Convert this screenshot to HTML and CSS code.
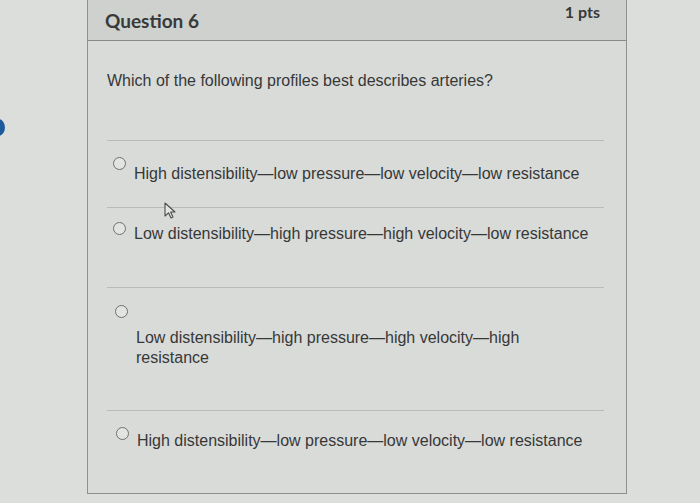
FILE: index.html
```html
<!DOCTYPE html>
<html>
<head>
<meta charset="utf-8">
<link rel="stylesheet" href="styles.css">
</head>
<body>
<div class="dot"></div>
<div class="card">
  <div class="header">
    <div class="title">Question 6</div>
    <div class="pts">1 pts</div>
  </div>
  <div class="body">
    <p class="question">Which of the following profiles best describes arteries?</p>
    <div class="answers">
      <div class="answer a1"><span class="radio"></span><span class="label">High distensibility—low pressure—low velocity—low resistance</span></div>
      <div class="answer a2"><span class="radio"></span><span class="label">Low distensibility—high pressure—high velocity—low resistance</span></div>
      <div class="answer a3"><span class="radio"></span><span class="label">Low distensibility—high pressure—high velocity—high<br>resistance</span></div>
      <div class="answer a4"><span class="radio"></span><span class="label">High distensibility—low pressure—low velocity—low resistance</span></div>
    </div>
  </div>
</div>
<svg class="cursor" width="14" height="18" viewBox="0 0 14 18"><path d="M1 1 L1 14 L4.5 10.8 L7 16 L9 15 L6.6 10 L11 10 Z" fill="#e4e6e3" stroke="#4a4c4c" stroke-width="1.1" stroke-linejoin="round"/></svg>
</body>
</html>
```
FILE: styles.css
```css
html, body {
  margin: 0;
  padding: 0;
}
body {
  background: #dcdedb;
  width: 700px;
  height: 503px;
  overflow: hidden;
  position: relative;
  font-family: "Liberation Sans", Arial, sans-serif;
  color: #363838;
}
.dot {
  position: absolute;
  left: -9px;
  top: 119px;
  width: 14px;
  height: 17px;
  border-radius: 50%;
  background: #1d5a9c;
}
.card {
  margin-left: 87px;
  width: 540px;
  height: 494px;
  border: 1px solid #8f918f;
  border-top: none;
  background: #d9dbd8;
  box-sizing: border-box;
}
.header {
  height: 40px;
  background: #cfd1ce;
  border-bottom: 1px solid #888a88;
  display: flex;
  justify-content: space-between;
  align-items: flex-start;
  padding: 0 26px 0 17px;
  font-family: Lato, "Liberation Sans", sans-serif;
  font-weight: 700;
  color: #383a3a;
}
.title {
  font-size: 19px;
  margin-top: 9px;
}
.pts {
  font-size: 16px;
  margin-top: 2px;
}
.body {
  padding: 0 22px 0 19px;
}
.question {
  margin: 31px 0 0 0;
  font-size: 16px;
  line-height: 18px;
}
.answers {
  margin-top: 50px;
}
.answer {
  border-top: 1px solid #b9bbb8;
  display: flex;
  align-items: flex-start;
  font-size: 16px;
  line-height: 20px;
  box-sizing: border-box;
}
.radio {
  width: 11px;
  height: 11px;
  border: 1px solid #6e706f;
  border-radius: 50%;
  background: #e2e4e1;
  margin: 16px 8px 0 6px;
  flex: none;
}
.label {
  margin-top: 23px;
}
.a1 { height: 67px; }
.a2 { height: 80px; }
.a2 .radio { margin-top: 14px; }
.a2 .label { margin-top: 16px; }
.a3 { height: 123px; }
.a3 .radio { margin-top: 17px; margin-left: 8px; }
.a3 .label { margin-top: 40px; }
.a4 .radio { margin-top: 16px; margin-left: 9px; }
.a4 .label { margin-top: 20px; }
.cursor {
  position: absolute;
  left: 164px;
  top: 202px;
}
```
